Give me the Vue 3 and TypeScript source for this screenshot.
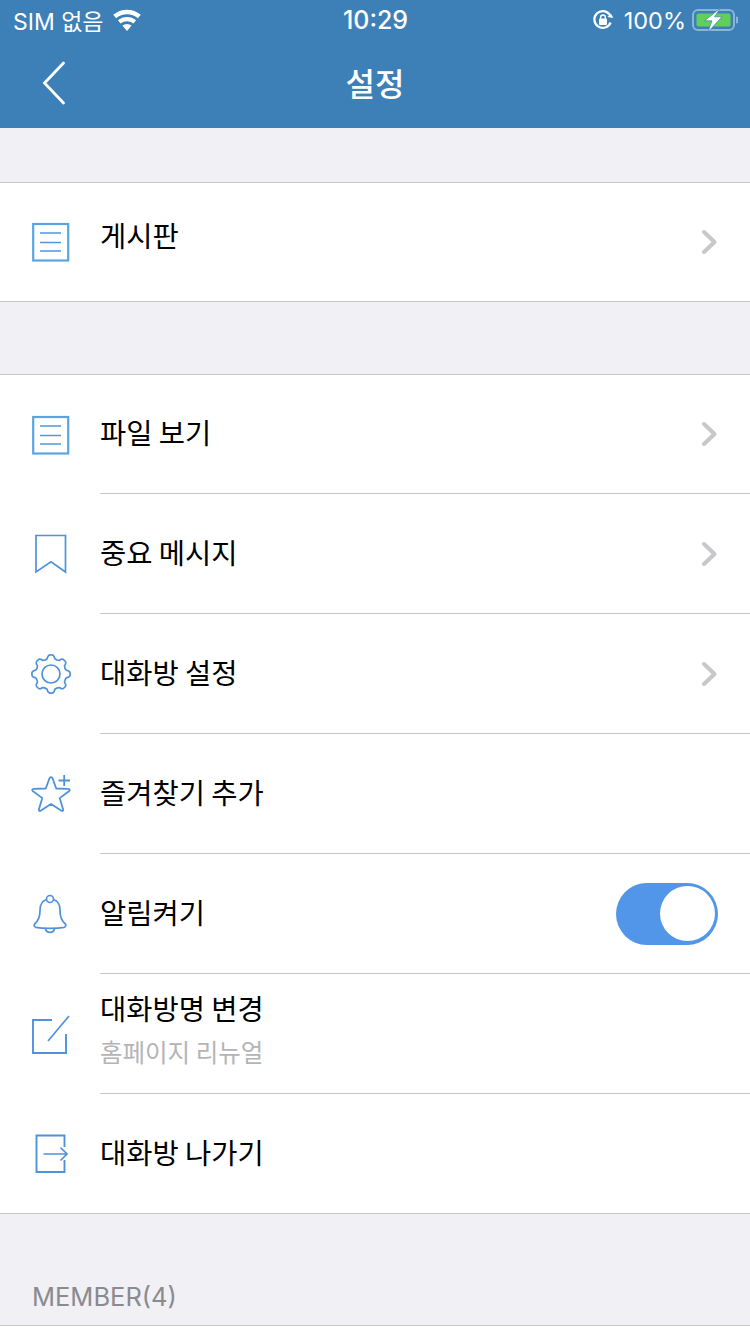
<script setup lang="ts">
interface Row {
  label: string
  icon: string
  chevron?: boolean
  toggle?: boolean
  sub?: string
}
const firstGroup: Row[] = [{ label: '게시판', icon: 'doc', chevron: true }]
const secondGroup: Row[] = [
  { label: '파일 보기', icon: 'doc', chevron: true },
  { label: '중요 메시지', icon: 'bookmark', chevron: true },
  { label: '대화방 설정', icon: 'gear', chevron: true },
  { label: '즐겨찾기 추가', icon: 'star' },
  { label: '알림켜기', icon: 'bell', toggle: true },
  { label: '대화방명 변경', icon: 'edit', sub: '홈페이지 리뉴얼' },
  { label: '대화방 나가기', icon: 'exit' },
]
const groups = [
  { key: 'a', rows: firstGroup, cls: 'group-a' },
  { key: 'b', rows: secondGroup, cls: 'group-b' },
]
function polar(r: number, t: number): string {
  return `${(20 + r * Math.cos(t)).toFixed(2)} ${(20 + r * Math.sin(t)).toFixed(2)}`
}
const gearPath = (() => {
  const teeth = 8
  const ro = 19
  const ri = 15.2
  const s = Math.PI / teeth
  const parts: string[] = []
  for (let i = 0; i < teeth; i++) {
    const a = (i * 2 * Math.PI) / teeth - Math.PI / 2
    if (i === 0) parts.push(`M${polar(ri + 0.6, a - s * 0.62)}`)
    else parts.push(`Q${polar(ri - 0.6, a - s)} ${polar(ri + 0.6, a - s * 0.62)}`)
    parts.push(`Q${polar(ro + 1, a - s * 0.38)} ${polar(ro, a)}`)
    parts.push(`Q${polar(ro + 1, a + s * 0.38)} ${polar(ri + 0.6, a + s * 0.62)}`)
  }
  const a0 = -Math.PI / 2
  parts.push(`Q${polar(ri - 0.6, a0 - s)} ${polar(ri + 0.6, a0 - s * 0.62)}Z`)
  return parts.join('')
})()
</script>

<template>
  <div class="page">
    <header class="top">
      <div class="status">
        <div class="st-left">
          <span>SIM 없음</span>
          <svg class="wifi" width="30" height="22" viewBox="0 0 30 22">
            <path fill="#fff" d="M15 22 10.4 16.6a7 7 0 0 1 9.2 0Z" />
            <path fill="#fff" d="M8.6 14.5 5.9 11.3a14 14 0 0 1 18.2 0l-2.7 3.2a10 10 0 0 0-12.8 0Z" />
            <path fill="#fff" d="M4.1 9.2 1.2 5.8a21 21 0 0 1 27.6 0l-2.9 3.4a17 17 0 0 0-21.8 0Z" />
          </svg>
        </div>
        <div class="st-time">10:29</div>
        <div class="st-right">
          <svg class="lock" width="22" height="22" viewBox="0 0 22 22">
            <path fill="none" stroke="#fff" stroke-width="2.2" d="M18.6 13.5A8.4 8.4 0 1 1 18 6.2" />
            <path fill="#fff" d="M15.6 8.6h6l-3-4z" transform="rotate(10 18.6 7)" />
            <rect x="7" y="9.6" width="8" height="6.4" rx="1" fill="#fff" />
            <path fill="none" stroke="#fff" stroke-width="1.4" d="M8.6 10V8.4a2.4 2.4 0 0 1 4.8 0V10" />
          </svg>
          <span class="pct">100%</span>
          <svg class="batt" width="46" height="24" viewBox="0 0 46 24">
            <rect x="1" y="2" width="41" height="20" rx="5" fill="none" stroke="#8db4d6" stroke-width="2" />
            <rect x="4.5" y="5.5" width="34" height="13" rx="2" fill="#62cf58" />
            <path d="M44 8.5a3.5 3.5 0 0 1 0 7z" fill="#8db4d6" />
            <path fill="#fff" stroke="#3d80b7" stroke-width="0.7" d="M28.5 0 12.5 12.8H20L16 24 30 8.8h-7.5Z" />
          </svg>
        </div>
      </div>
      <div class="nav">
        <svg class="back" width="24" height="46" viewBox="0 0 24 46">
          <path fill="none" stroke="#fff" stroke-width="2.8" stroke-linecap="round" d="M21.5 3 2.5 23l19 20" />
        </svg>
        <h1 class="title">설정</h1>
      </div>
    </header>

    <section v-for="g in groups" :key="g.key" class="group" :class="g.cls">
      <div v-for="(r, i) in g.rows" :key="r.label" class="row">
        <div class="ic">
          <svg v-if="r.icon === 'doc'" width="40" height="40" viewBox="0 0 40 40">
            <rect x="2.2" y="2" width="35" height="36.5" fill="none" stroke="#5aa5e0" stroke-width="2.2" />
            <path fill="none" stroke="#5297dc" stroke-width="1.7" d="M9 11h21M9 20.5h21M9 29h21" />
          </svg>
          <svg v-else-if="r.icon === 'bookmark'" width="40" height="40" viewBox="0 0 40 40">
            <path fill="none" stroke="#4f92dc" stroke-width="1.7" d="M5 1.5h29.5v36.500L20 27.800 5 38Z" />
          </svg>
          <svg v-else-if="r.icon === 'gear'" width="40" height="40" viewBox="0 0 40 40">
            <path fill="none" stroke="#4f92dc" stroke-width="1.7" stroke-linejoin="round" :d="gearPath" />
            <circle cx="20" cy="20" r="9" fill="none" stroke="#4f92dc" stroke-width="1.7" />
          </svg>
          <svg v-else-if="r.icon === 'star'" width="40" height="40" viewBox="0 0 40 40">
            <path fill="none" stroke="#4f92dc" stroke-width="1.8" stroke-linejoin="round" d="M20 3.200c.8 0 1.300.5 1.700 1.500l3.500 9.800 11.800.4c1.900.1 2.300 1.200.9 2.300l-9.200 6.900 3.300 11c.5 1.700-.5 2.400-1.900 1.500L20 30.100l-10.100 6.500c-1.400.9-2.400.2-1.900-1.500l3.300-11-9.200-6.900c-1.400-1.100-1-2.200.9-2.300l11.800-.4 3.500-9.800c.4-1 .9-1.500 1.700-1.500Z" />
            <path fill="none" stroke="#4f92dc" stroke-width="1.8" d="M27.500 6.500h11.500M33.200 1v11" />
          </svg>
          <svg v-else-if="r.icon === 'bell'" width="40" height="40" viewBox="0 0 40 40">
            <path fill="none" stroke="#4f92dc" stroke-width="1.7" stroke-linejoin="round" d="M19 5c-7 0-10 5-10 11.500 0 7-1.800 10.500-5.300 13.500-1 .9-.6 2.900 1 3.300 4 .7 9 1 14.300 1s10.300-.3 14.300-1c1.600-.4 2-2.400 1-3.300-3.500-3-5.300-6.500-5.300-13.500C29 10 26 5 19 5Z" />
            <circle cx="19" cy="5" r="3.500" fill="#fff" stroke="#4f92dc" stroke-width="1.7" />
            <path fill="none" stroke="#4f92dc" stroke-width="1.7" d="M14.500 34.800a4.600 4.600 0 0 0 9 0" />
          </svg>
          <svg v-else-if="r.icon === 'edit'" width="40" height="40" viewBox="0 0 40 40">
            <path fill="none" stroke="#4f92dc" stroke-width="1.9" d="M21 6H2v33h33V20" />
            <path fill="none" stroke="#4f92dc" stroke-width="1.7" d="M17 27 38 2" />
          </svg>
          <svg v-else width="40" height="40" viewBox="0 0 40 40">
            <path fill="none" stroke="#4f92dc" stroke-width="1.9" d="M33.500 13V1.500H5.500v36.500h28V26" />
            <path fill="none" stroke="#4f92dc" stroke-width="1.7" d="M12.500 20h23.500M29.500 13.500l6.500 6.500-6.500 6.500" />
          </svg>
        </div>
        <div class="body" :class="{ last: i === g.rows.length - 1 }">
          <div class="text" :class="{ lifted: g.key === 'a', double: !!r.sub }">
            <div class="label">{{ r.label }}</div>
            <div v-if="r.sub" class="sub">{{ r.sub }}</div>
          </div>
          <svg v-if="r.chevron" class="chev" width="18" height="26" viewBox="0 0 18 26">
            <path fill="none" stroke="#c7c7cc" stroke-width="4" stroke-linecap="round" stroke-linejoin="round" d="M4 3l10.500 10L4 23" />
          </svg>
          <div v-if="r.toggle" class="switch"><span class="knob"></span></div>
        </div>
      </div>
    </section>

    <div class="member">MEMBER(4)</div>
    <div class="rest"></div>
  </div>
</template>

<style>
html,
body {
  margin: 0;
  background: #fff;
}
</style>

<style scoped>
.page {
  width: 750px;
  height: 1334px;
  overflow: hidden;
  background: #f0f0f5;
  font-family: "Noto Sans CJK KR", "Noto Sans", sans-serif;
  display: flex;
  flex-direction: column;
}
.top {
  height: 128px;
  background: #3d80b7;
  color: #fff;
  flex: none;
}
.status {
  height: 40px;
  display: flex;
  align-items: center;
  justify-content: space-between;
  padding: 0 12px 0 13px;
  font-size: 23px;
  font-family: Inter, "Noto Sans CJK KR", sans-serif;
}
.st-left,
.st-right {
  width: 300px;
  display: flex;
  align-items: center;
}
.st-left {
  gap: 8px;
}
.st-right {
  justify-content: flex-end;
  font-size: 23.5px;
}
.st-time {
  font-weight: 500;
  font-size: 25px;
}
.lock {
  margin-right: 10px;
}
.pct {
  margin-right: 6px;
}
.nav {
  height: 88px;
  position: relative;
  display: flex;
  align-items: center;
  justify-content: center;
}
.back {
  position: absolute;
  left: 42px;
  top: 20px;
}
.title {
  margin: 0 0 4px;
  font-size: 32px;
  font-weight: 500;
  line-height: 44px;
}
.group {
  background: #fff;
  border-top: 1px solid #c8c7cc;
  border-bottom: 1px solid #c8c7cc;
  flex: none;
}
.group-a {
  margin-top: 54px;
}
.group-b {
  margin-top: 72px;
}
.row {
  height: 120px;
  display: flex;
  align-items: center;
  box-sizing: border-box;
}
.row:first-child {
  height: 118px;
}
.group-b .row:first-child,
.group-b .row:last-child {
  height: 119px;
}
.ic {
  width: 100px;
  flex: none;
  display: flex;
  justify-content: center;
  box-sizing: border-box;
  padding-left: 2px;
}
.ic svg {
  display: block;
}
.body {
  flex: 1;
  align-self: stretch;
  min-width: 0;
  display: flex;
  align-items: center;
  justify-content: space-between;
  padding-right: 32px;
  border-bottom: 1px solid #c8c7cc;
}
.body.last {
  border-bottom: 0;
}
.text {
  padding-bottom: 4px;
}
.text.lifted {
  padding-bottom: 14px;
}
.text.double {
  padding-bottom: 11px;
}
.label {
  font-size: 28.5px;
  line-height: 40px;
  color: #000;
}
.sub {
  font-size: 24.5px;
  line-height: 34px;
  margin-top: 7px;
  color: #b4b4b8;
}
.switch {
  width: 102px;
  height: 62px;
  box-sizing: border-box;
  border-radius: 31px;
  background: #5296ea;
  display: flex;
  align-items: center;
  justify-content: flex-end;
  padding-right: 3px;
}
.knob {
  width: 55px;
  height: 55px;
  border-radius: 50%;
  background: #fff;
}
.member {
  height: 112px;
  box-sizing: border-box;
  padding: 61px 0 0 32px;
  font-family: Inter, "Noto Sans", sans-serif;
  font-size: 25.5px;
  line-height: 44px;
  color: #8a8a8f;
  border-bottom: 1px solid #c8c7cc;
  flex: none;
}
.rest {
  flex: 1;
  background: #fff;
}
</style>
